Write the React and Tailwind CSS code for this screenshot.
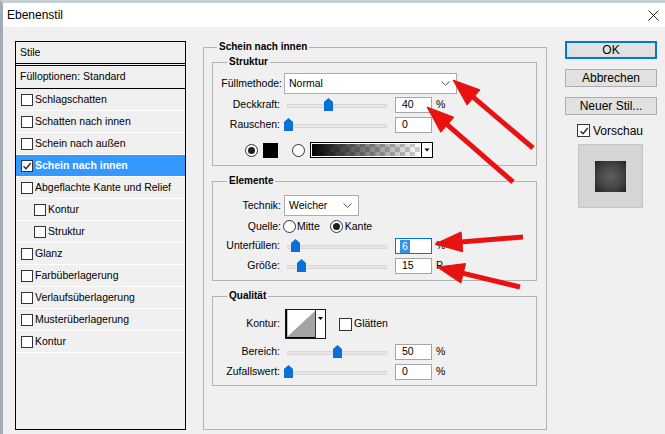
import React from 'react';

const SANS = "font-['Liberation_Sans',Arial,sans-serif]";

const STYLES = [
  { label: 'Schlagschatten' },
  { label: 'Schatten nach innen' },
  { label: 'Schein nach außen' },
  { label: 'Schein nach innen', checked: true, active: true },
  { label: 'Abgeflachte Kante und Relief' },
  { label: 'Kontur', indent: true },
  { label: 'Struktur', indent: true },
  { label: 'Glanz' },
  { label: 'Farbüberlagerung' },
  { label: 'Verlaufsüberlagerung' },
  { label: 'Musterüberlagerung' },
  { label: 'Kontur' },
];

// tip and tail of the red annotation arrows, page coordinates
const ARROWS = [
  { tip: [453, 80], tail: [533, 148] },
  { tip: [427, 107], tail: [513, 182] },
  { tip: [435, 244], tail: [523, 237] },
  { tip: [437, 267], tail: [520, 287] },
];

function Checkbox({ checked, size = 'h-[12px] w-[12px]' }) {
  return (
    <span className={`flex shrink-0 items-center justify-center border border-[#333] bg-white ${size}`}>
      {checked && (
        <svg width="10" height="10" viewBox="0 0 10 10">
          <path d="M1.5 5.2 L4 7.7 L8.7 2" fill="none" stroke="#222" strokeWidth="1.3" />
        </svg>
      )}
    </span>
  );
}

function Radio({ checked }) {
  return (
    <span className="flex h-[13px] w-[13px] shrink-0 items-center justify-center rounded-full border border-[#333] bg-white">
      {checked && <span className="h-[7px] w-[7px] rounded-full bg-[#1e1e1e]" />}
    </span>
  );
}

function Chevron() {
  return (
    <svg width="9" height="5" viewBox="0 0 9 5">
      <path d="M0.5 0.5 L4.5 4.3 L8.5 0.5" fill="none" stroke="#555" strokeWidth="1" />
    </svg>
  );
}

function Select({ value, width }) {
  return (
    <div className={`flex h-[21px] shrink-0 items-center justify-between border border-[#acacac] bg-white pl-[4px] pr-[6px] ${width}`}>
      <span>{value}</span>
      <Chevron />
    </div>
  );
}

function Slider({ thumb }) {
  // thumb: page x of thumb centre, track starts at x=287
  return (
    <div className="relative flex h-[16px] w-[100px] shrink-0 items-center">
      <div className="mt-[2px] h-[4px] w-full border border-[#d8d8d8] bg-[#e6e6e6]" />
      <svg className="absolute top-[1px]" style={{ left: thumb - 287 - 4 }} width="9" height="13" viewBox="0 0 9 13">
        <path d="M4.5 0 L9 4 V13 H0 V4 Z" fill="#0a6fd6" />
      </svg>
    </div>
  );
}

function NumInput({ value, focused }) {
  return (
    <div
      className={`ml-[8px] flex h-[16px] w-[37px] shrink-0 items-center bg-white ${
        focused ? 'border border-[#0078d7] pl-[4px]' : 'border border-[#a6a6a6] pl-[6px]'
      }`}
    >
      {focused ? <span className="bg-[#3b8fe0] px-[2px] leading-[13px] text-white">{value}</span> : value}
    </div>
  );
}

function SliderRow({ label, thumb, value, unit = '%', focused, className = '' }) {
  return (
    <div className={`flex h-[16px] items-center ${className}`}>
      <div className="w-[67px] shrink-0 text-right">{label}</div>
      <div className="ml-[7px]">
        <Slider thumb={thumb} />
      </div>
      <NumInput value={value} focused={focused} />
      <span className="ml-[4px]">{unit}</span>
    </div>
  );
}

function Group({ title, className = '', children }) {
  return (
    <fieldset className={`border border-[#b4b4b4] p-0 ${className}`}>
      <legend className="ml-[14px] px-[2px] text-[10px] font-bold leading-[12px]">{title}</legend>
      {children}
    </fieldset>
  );
}

function GradientSwatch() {
  return (
    <svg width="123" height="16" viewBox="0 0 123 16">
      <defs>
        <pattern id="chk" width="10" height="10" patternUnits="userSpaceOnUse">
          <rect width="10" height="10" fill="#fff" />
          <rect width="5" height="5" fill="#cfcfcf" />
          <rect x="5" y="5" width="5" height="5" fill="#cfcfcf" />
        </pattern>
        <linearGradient id="fade" x1="0" x2="1" y1="0" y2="0">
          <stop offset="0" stopColor="#000" stopOpacity="1" />
          <stop offset="1" stopColor="#000" stopOpacity="0" />
        </linearGradient>
      </defs>
      <rect x="0.5" y="0.5" width="122" height="15" fill="#fff" stroke="#000" />
      <rect x="2" y="2" width="108" height="12" fill="url(#chk)" />
      <rect x="2" y="2" width="108" height="12" fill="url(#fade)" />
      <line x1="111.5" y1="1" x2="111.5" y2="15" stroke="#000" />
      <path d="M114.5 6.5 H119.5 L117 9.5 Z" fill="#000" />
    </svg>
  );
}

function ContourSwatch() {
  return (
    <svg width="41" height="30" viewBox="0 0 41 30">
      <rect x="0.5" y="0.5" width="40" height="29" fill="#fff" stroke="#1a1a1a" />
      <path d="M2 28 L30 2 V28 Z" fill="#a4a4a4" />
      <line x1="1.5" y1="1" x2="1.5" y2="29" stroke="#000" strokeWidth="1.5" />
      <line x1="1" y1="28.5" x2="30" y2="28.5" stroke="#000" />
      <line x1="30.5" y1="1" x2="30.5" y2="29" stroke="#333" />
      <path d="M33 8 H38 L35.5 11 Z" fill="#000" />
    </svg>
  );
}

function Button({ children, primary }) {
  return (
    <div
      className={`flex h-[18px] w-[92px] items-center justify-center bg-[#e1e1e1] text-[12px] ${
        primary ? 'border-2 border-[#0078d7]' : 'border border-[#adadad]'
      }`}
    >
      {children}
    </div>
  );
}

function arrowHead(tip, tail, len = 27, half = 10) {
  const dx = tail[0] - tip[0];
  const dy = tail[1] - tip[1];
  const d = Math.hypot(dx, dy);
  const ux = dx / d;
  const uy = dy / d;
  const bx = tip[0] + ux * len;
  const by = tip[1] + uy * len;
  return {
    points: `${tip[0]},${tip[1]} ${bx - uy * half},${by + ux * half} ${bx + uy * half},${by - ux * half}`,
    base: [tip[0] + ux * (len - 4), tip[1] + uy * (len - 4)],
  };
}

export default function App() {
  return (
    <div className={`relative h-[434px] w-[665px] overflow-hidden border-l-[3px] border-t-[3px] border-l-[#a3acb5] border-t-[#c6ced6] bg-[#f0f0f0] text-[10.5px] text-black ${SANS}`}>
      {/* Title bar */}
      <div className="flex h-[24px] items-center justify-between bg-white pl-[4px] pr-[6px]">
        <span className="text-[12px]">Ebenenstil</span>
        <svg width="11" height="11" viewBox="0 0 11 11">
          <path d="M0.5 0.5 L10.5 10.5 M10.5 0.5 L0.5 10.5" stroke="#222" strokeWidth="1" />
        </svg>
      </div>

      <div className="flex">
        {/* Style list */}
        <div className="ml-[12px] mt-[14px] h-[389px] w-[171px] shrink-0 border border-black">
          <div className="flex h-[24px] items-center border-b-[3px] border-double border-black pl-[4px]">Stile</div>
          <div className="flex h-[23px] items-center border-b border-black pl-[4px]">Fülloptionen: Standard</div>
          {STYLES.map((s, i) => (
            <div
              key={i}
              className={`flex h-[22px] items-center border-b border-white ${s.indent ? 'pl-[18px]' : 'pl-[5px]'} ${
                s.active ? 'bg-[#3399ff] font-bold text-white' : ''
              }`}
            >
              <Checkbox checked={s.checked} />
              <span className="ml-[2px]">{s.label}</span>
            </div>
          ))}
        </div>

        {/* Settings */}
        <fieldset className="ml-[17px] mt-[14px] h-[389px] w-[344px] shrink-0 border border-[#b4b4b4] pl-[8px] pr-[9px]">
          <legend className="ml-[5px] px-[2px] text-[10px] font-bold leading-[12px]">Schein nach innen</legend>

          <Group title="Struktur" className="mt-[3px] pb-[7px]">
            <div className="mt-[5px] flex items-center">
              <div className="w-[69px] shrink-0 text-right">Füllmethode:</div>
              <div className="ml-[2px]">
                <Select value="Normal" width="w-[173px]" />
              </div>
            </div>
            <SliderRow label="Deckkraft:" thumb={328} value="40" className="mt-[3px]" />
            <SliderRow label="Rauschen:" thumb={288} value="0" className="mt-[4px]" />
            <div className="mt-[9px] flex h-[16px] items-center pl-[32px]">
              <Radio checked />
              <span className="ml-[5px] h-[15px] w-[15px] bg-black" />
              <span className="ml-[14px]">
                <Radio />
              </span>
              <span className="ml-[5px] flex">
                <GradientSwatch />
              </span>
            </div>
          </Group>

          <Group title="Elemente" className="mt-[9px] pb-[6px]">
            <div className="mt-[8px] flex items-center">
              <div className="w-[68px] shrink-0 text-right">Technik:</div>
              <div className="ml-[3px]">
                <Select value="Weicher" width="w-[75px]" />
              </div>
            </div>
            <div className="mt-[4px] flex h-[13px] items-center">
              <div className="w-[68px] shrink-0 text-right">Quelle:</div>
              <span className="ml-[2px]">
                <Radio />
              </span>
              <span className="ml-[1px]">Mitte</span>
              <span className="ml-[10px]">
                <Radio checked />
              </span>
              <span className="ml-[2px]">Kante</span>
            </div>
            <SliderRow label="Unterfüllen:" thumb={295} value="6" focused className="mt-[5px]" />
            <SliderRow label="Größe:" thumb={301} value="15" unit="P" className="mt-[4px]" />
          </Group>

          <Group title="Qualität" className="mt-[9px] pb-[5px]">
            <div className="mt-[7px] flex items-center">
              <div className="w-[67px] shrink-0 text-right">Kontur:</div>
              <span className="ml-[5px] flex">
                <ContourSwatch />
              </span>
              <span className="ml-[13px]">
                <Checkbox size="h-[13px] w-[13px]" />
              </span>
              <span className="ml-[2px]">Glätten</span>
            </div>
            <SliderRow label="Bereich:" thumb={337} value="50" className="mt-[5px]" />
            <SliderRow label="Zufallswert:" thumb={288} value="0" className="mt-[4px]" />
          </Group>
        </fieldset>

        {/* Buttons & preview */}
        <div className="ml-[18px] mt-[14px] flex w-[92px] shrink-0 flex-col">
          <Button primary>OK</Button>
          <div className="mt-[10px]">
            <Button>Abbrechen</Button>
          </div>
          <div className="mt-[10px]">
            <Button>Neuer Stil...</Button>
          </div>
          <div className="ml-[12px] mt-[9px] flex h-[13px] items-center text-[12px]">
            <Checkbox checked size="h-[13px] w-[13px]" />
            <span className="ml-[3px]">Vorschau</span>
          </div>
          <div className="ml-[13px] mt-[7px] flex h-[64px] w-[65px] items-center justify-center border border-[#c4c4c4] bg-[#d5d5d5]">
            <div className="h-[31px] w-[31px] bg-[radial-gradient(circle,#5e5e5e_0%,#444_55%,#222_100%)]" />
          </div>
        </div>
      </div>

      {/* Red annotation arrows */}
      <svg className="pointer-events-none absolute -left-[3px] -top-[3px]" width="665" height="434" viewBox="0 0 665 434">
        {ARROWS.map((a, i) => {
          const head = arrowHead(a.tip, a.tail);
          return (
            <g key={i} fill="#e81212" stroke="#e81212">
              <line x1={head.base[0]} y1={head.base[1]} x2={a.tail[0]} y2={a.tail[1]} strokeWidth="5" />
              <polygon points={head.points} strokeWidth="1" strokeLinejoin="round" />
            </g>
          );
        })}
      </svg>
    </div>
  );
}
